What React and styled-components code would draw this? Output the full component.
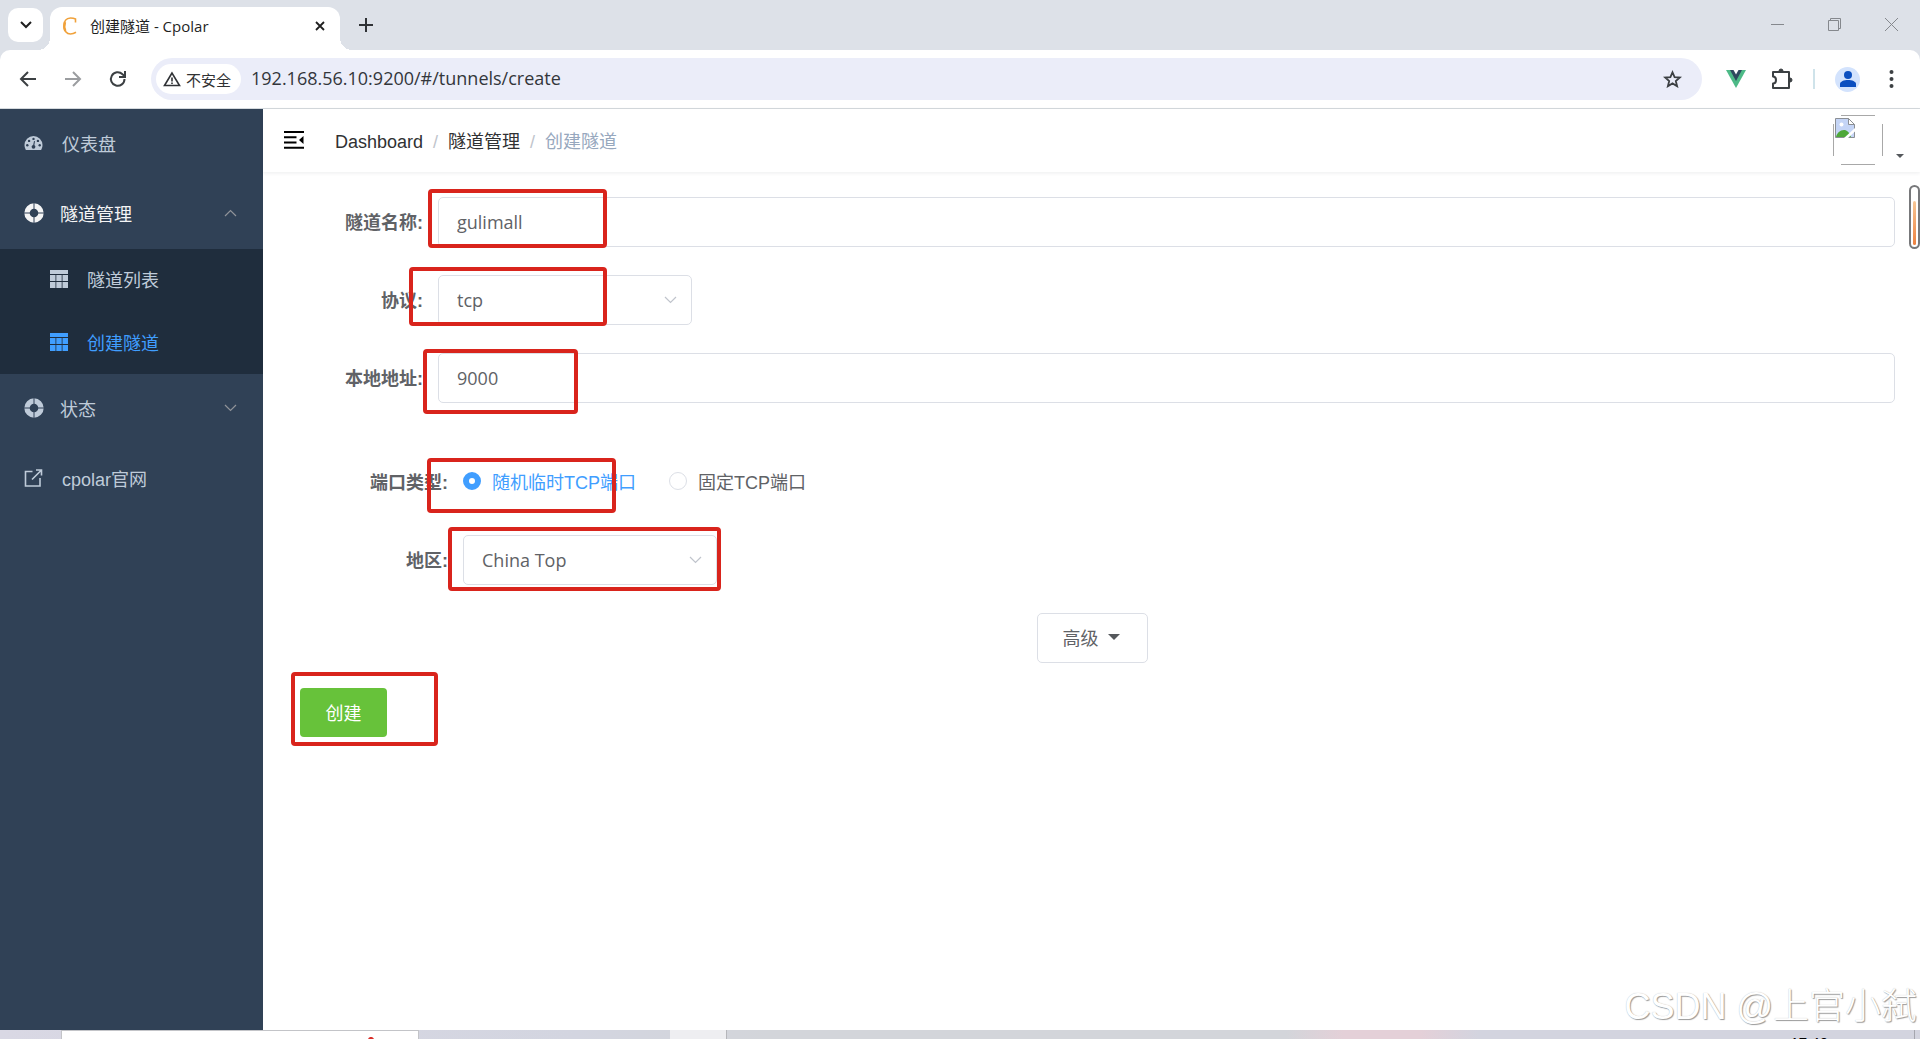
import React, { useState } from "react";
import styled, { createGlobalStyle, ThemeProvider } from "styled-components";

const theme = {
  Color: {
    blue: "#409eff",
    green: "#67c23a",
    red: "#d9241c",
    border: "#dcdfe6",
    text: "#606266",
    sidebar: "#304156",
    submenu: "#1f2d3d",
    menuText: "#bfcbd9",
  },
  Font: {
    page: `"Liberation Sans", "Noto Sans CJK SC", sans-serif`,
    ui: `"Open Sans", "Noto Sans CJK SC", sans-serif`,
  },
};

const GlobalStyle = createGlobalStyle`
  * {
    box-sizing: border-box;
  }
  body {
    margin: 0;
    overflow: hidden;
    font-family: ${theme.Font.page};
    font-size: 18px;
    color: #303133;
    background: #fff;
  }
  button, input, select {
    font: inherit;
    color: inherit;
  }
  button {
    padding: 0;
    border: 0;
    background: none;
    cursor: pointer;
  }
  a {
    color: inherit;
    text-decoration: none;
  }
  svg {
    display: block;
    flex-shrink: 0;
  }
`;

const Screen = styled.div`
  display: flex;
  flex-direction: column;
  height: 100vh;
`;

const TabStrip = styled.div`
  display: flex;
  align-items: flex-end;
  height: 50px;
  padding-left: 8px;
  background: #dde1e8;
  flex-shrink: 0;
`;

const TabSearch = styled.button`
  display: flex;
  align-items: center;
  justify-content: center;
  width: 35px;
  height: 34px;
  margin: 0 7px 8px 0;
  border-radius: 10px;
  background: #fff;
`;

const Tab = styled.div`
  position: relative;
  display: flex;
  align-items: center;
  width: 290px;
  height: 43px;
  padding: 0 13px 6px 12px;
  border-radius: 12px 12px 0 0;
  background: #fff;
  font-family: ${({ theme }) => theme.Font.ui};
  font-size: 15px;
  color: #1f1f1f;

  &::before,
  &::after {
    content: "";
    position: absolute;
    bottom: 0;
    width: 12px;
    height: 12px;
  }
  &::before {
    right: 100%;
    background: radial-gradient(circle at 0 0, transparent 12px, #fff 12px);
  }
  &::after {
    left: 100%;
    background: radial-gradient(circle at 100% 0, transparent 12px, #fff 12px);
  }
`;

const TabTitle = styled.span`
  flex: 1;
  margin-left: 13px;
`;

const NewTab = styled.button`
  display: flex;
  margin: 0 0 18px 19px;
`;

const WindowButtons = styled.div`
  display: flex;
  gap: 44px;
  margin: 0 22px 19px auto;
`;

const ToolbarRoot = styled.div`
  flex-shrink: 0;
  background: #dde1e8;
  .Toolbar-inner {
    display: flex;
    align-items: center;
    height: 59px;
    padding: 0 26px 0 18px;
    border-radius: 10px 10px 0 0;
    border-bottom: 1px solid #d5dade;
    background: #fff;
  }
  .Toolbar-nav {
    display: flex;
    align-items: center;
    gap: 25px;
    margin-right: 23px;
  }
  .Toolbar-nav button {
    display: flex;
  }
  .Toolbar-actions {
    display: flex;
    align-items: center;
    margin-left: 24px;
  }
`;

const AddressBar = styled.div`
  display: flex;
  align-items: center;
  flex: 1;
  height: 42px;
  padding: 0 20px 0 5px;
  border-radius: 21px;
  background: #ebedf9;
  font-family: ${({ theme }) => theme.Font.ui};
`;

const SafetyChip = styled.button`
  display: flex;
  align-items: center;
  gap: 5px;
  height: 30px;
  padding: 0 10px 0 7px;
  border-radius: 15px;
  background: #fff;
  font-size: 15px;
  white-space: nowrap;
`;

const Url = styled.input`
  flex: 1;
  min-width: 0;
  margin-left: 10px;
  padding: 0 0 2px;
  border: 0;
  outline: 0;
  background: none;
  color: #33363b;
`;

const ExtensionButtons = styled.div`
  display: flex;
  align-items: center;
  gap: 25px;
`;

const Divider = styled.span`
  width: 2px;
  height: 20px;
  margin: 0 20px;
  background: #cfe3ea;
`;

const Profile = styled.button`
  display: flex;
  align-items: center;
  justify-content: center;
  width: 25px;
  height: 25px;
  margin-right: 29px;
  border-radius: 50%;
  background: #d3e3fd;
`;

const Page = styled.div`
  display: flex;
  flex: 1;
  min-height: 0;
`;

const Sidebar = styled.nav`
  width: 263px;
  flex-shrink: 0;
  background: ${({ theme }) => theme.Color.sidebar};
`;

const MenuItem = styled.a`
  display: flex;
  align-items: center;
  height: ${({ $nested }) => ($nested ? 62 : 70)}px;
  padding: 0 26px 2px ${({ $nested }) => ($nested ? 50 : 24)}px;
  color: ${({ theme, $active, $open }) =>
    $active ? theme.Color.blue : $open ? "#f4f4f5" : theme.Color.menuText};

  .MenuItem-label {
    flex: 1;
    margin-left: ${({ $gap }) => $gap || 16}px;
  }
`;

const SubMenu = styled.div`
  display: flex;
  flex-direction: column;
  gap: 1px;
  background: ${({ theme }) => theme.Color.submenu};
`;

const Main = styled.main`
  position: relative;
  flex: 1;
  min-width: 0;
`;

const Navbar = styled.header`
  display: flex;
  align-items: center;
  height: 63px;
  padding: 0 16px 2px 21px;
  box-shadow: 0 1px 4px rgba(0, 21, 41, 0.08);
`;

const Breadcrumb = styled.div`
  display: flex;
  align-items: baseline;
  flex: 1;
  margin-left: 31px;
  .Separator {
    margin: 0 10px;
    color: #c0c4cc;
  }
  .Current {
    color: #97a8be;
  }
`;

const AvatarButton = styled.button`
  display: flex;
  align-items: flex-end;
  gap: 13px;
  .Caret {
    margin-bottom: 7px;
  }
`;

const Form = styled.form`
  padding: 25px 25px 0 26px;
`;

const Row = styled.div`
  position: relative;
  display: flex;
  align-items: center;
  height: 50px;
  margin-bottom: ${({ $last }) => ($last ? 54 : 28)}px;
`;

const Label = styled.label`
  width: ${({ $wide }) => ($wide ? 174 : 149)}px;
  padding: 0 15px 2px 0;
  flex-shrink: 0;
  text-align: right;
  font-weight: 700;
  white-space: nowrap;
  color: ${({ theme }) => theme.Color.text};
`;

const TextInput = styled.input`
  flex: 1;
  min-width: 0;
  height: 50px;
  padding: 0 18px;
  border: 1px solid ${({ theme }) => theme.Color.border};
  border-radius: 5px;
  outline: 0;
  background: #fff;
  font-family: ${({ theme }) => theme.Font.ui};
  color: ${({ theme }) => theme.Color.text};
`;

const SelectBox = styled.div`
  position: relative;
  width: 254px;
  select {
    width: 100%;
    height: 50px;
    padding: 0 40px 0 18px;
    border: 1px solid ${({ theme }) => theme.Color.border};
    border-radius: 5px;
    outline: 0;
    appearance: none;
    background: #fff;
    font-family: ${({ theme }) => theme.Font.ui};
    color: ${({ theme }) => theme.Color.text};
  }
  svg {
    position: absolute;
    top: 21px;
    right: 15px;
    pointer-events: none;
  }
`;

const RadioLabel = styled.label`
  display: flex;
  align-items: center;
  margin-right: 33px;
  padding-bottom: 2px;
  white-space: nowrap;
  color: ${({ theme, $checked }) =>
    $checked ? theme.Color.blue : theme.Color.text};
  input {
    width: 18px;
    height: 18px;
    margin: 0 11px 0 0;
    appearance: none;
    border: 1px solid ${({ theme }) => theme.Color.border};
    border-radius: 50%;
    background: #fff;
  }
  input:checked {
    border: 6px solid ${({ theme }) => theme.Color.blue};
  }
`;

// red marker drawn over a form row
const Marker = styled.span`
  position: absolute;
  top: ${({ $top }) => $top}px;
  left: ${({ $left }) => $left}px;
  width: ${({ $width }) => $width}px;
  height: ${({ $height }) => $height}px;
  border: 4px solid ${({ theme }) => theme.Color.red};
  border-radius: 4px;
  pointer-events: none;
`;

const AdvancedButton = styled.button`
  display: flex;
  align-items: center;
  gap: 9px;
  height: 50px;
  margin: 0 auto 25px;
  padding: 0 27px 2px 25px;
  border: 1px solid ${({ theme }) => theme.Color.border};
  border-radius: 5px;
  color: ${({ theme }) => theme.Color.text};
`;

const Submit = styled.div`
  position: relative;
  display: flex;
  padding-left: 11px;
  button {
    width: 87px;
    height: 49px;
    padding-bottom: 2px;
    border-radius: 4px;
    background: ${({ theme }) => theme.Color.green};
    color: #fff;
  }
`;

const Gauge = styled.div`
  position: absolute;
  top: 76px;
  right: 0;
  width: 11px;
  height: 64px;
  padding: 14px 2px 0;
  border: 2px solid #77787a;
  border-radius: 6px;
  background: #fff;
  &::after {
    content: "";
    display: block;
    height: 44px;
    border-radius: 3px;
    background: linear-gradient(#f7c796, #ee8240);
  }
`;

const Watermark = styled.div`
  position: absolute;
  right: 3px;
  bottom: 0;
  font-size: 36px;
  font-weight: 300;
  line-height: 46px;
  white-space: nowrap;
  color: #fff;
  text-shadow: 1px 1px 1px #999, 0 0 1px #bbb;
  pointer-events: none;
`;

const Taskbar = styled.footer`
  display: flex;
  height: 9px;
  overflow: hidden;
  flex-shrink: 0;
  padding: 0 5px 0 61px;
  background: linear-gradient(
    90deg,
    #d9d8e4,
    #d3d5e0 30%,
    #d3d5da 40%,
    #d3d5da 67%,
    #e4d0d8 70%,
    #e4d0d8 74%,
    #d3d4df 77%
  );
  .Taskbar-search {
    display: flex;
    justify-content: flex-end;
    width: 358px;
    padding: 6px 40px 0 0;
    border: 1px solid #c3c4c8;
    border-bottom: 0;
    background: #fff;
  }
  .Taskbar-app {
    width: 57px;
    margin-left: 251px;
    border-right: 1px solid #b5b6ba;
    background: #eeeef1;
  }
  .Taskbar-tray {
    display: flex;
    flex: 1;
    justify-content: flex-end;
    padding: 4px 86px 0 0;
    border-right: 1px solid #a5a6ae;
    font-size: 15px;
    line-height: 17px;
    color: #000;
  }
`;

const Chevron = ({ up, color = "#c0c4cc" }) => (
  <svg width="13" height="8" viewBox="0 0 13 8" fill="none" stroke={color}>
    <path d={up ? "M1 7l5.5-5.5L12 7" : "M1 1l5.5 5.5L12 1"} strokeWidth="1.2" />
  </svg>
);

const Caret = ({ width = 12, className }) => (
  <svg
    className={className}
    width={width}
    height={width / 2}
    viewBox="0 0 12 6"
    fill="#55585c"
  >
    <path d="M0 0h12L6 6z" />
  </svg>
);

const DashboardIcon = () => (
  <svg width="19" height="18" viewBox="0 0 18 18" fill="currentColor">
    <path d="M9 2a9 9 0 0 0-9 9c0 1.800.5 3.500 1.400 5h15.200c.9-1.500 1.400-3.200 1.400-5a9 9 0 0 0-9-9z" />
    <g fill="#304156">
      <circle cx="2.800" cy="11.300" r="1.200" />
      <circle cx="4.600" cy="6.900" r="1.200" />
      <circle cx="9" cy="4.900" r="1.200" />
      <circle cx="13.400" cy="6.900" r="1.200" />
      <circle cx="15.200" cy="11.300" r="1.200" />
      <circle cx="9" cy="12.800" r="1.900" />
      <path d="M8.500 12l1-5 1 .2-.8 5z" />
    </g>
  </svg>
);

const RingIcon = () => (
  <svg width="20" height="20" viewBox="0 0 20 20" fill="none">
    <circle cx="10" cy="10" r="7" stroke="currentColor" strokeWidth="5.400" />
    <path
      d="M10 0v6M10 14v6M0 10h6M14 10h6"
      stroke="#304156"
      strokeWidth="1"
    />
  </svg>
);

const TableIcon = () => (
  <svg width="18" height="18" viewBox="0 0 18 18" fill="currentColor">
    <path d="M0 0h18v4H0zM0 5h5.500v6H0zM6.300 5h5.400v6H6.300zM12.500 5H18v6h-5.500zM0 12h5.500v6H0zM6.300 12h5.400v6H6.300zM12.500 12H18v6h-5.500z" />
  </svg>
);

const LinkIcon = () => (
  <svg
    width="19"
    height="18"
    viewBox="0 0 18 18"
    fill="none"
    stroke="currentColor"
    strokeWidth="1.600"
  >
    <path d="M8 2.500H1v14.500h14.500V9M7.500 10.500L16.500 1.500M11.500 1H17v5.500" />
  </svg>
);

const FoldIcon = () => (
  <svg width="20" height="18" viewBox="0 0 20 18" fill="#000">
    <path d="M0 0h20v2H0zM0 5.300h12.500v2H0zM0 10.500h12.500v2H0zM0 15.800h20v2H0zM19.500 5v8L15 9z" />
  </svg>
);

const BrokenAvatar = () => (
  <svg width="50" height="50" viewBox="0 0 50 50" fill="none">
    <path d="M8 .5h34M8 49.500h34M.5 9v32M49.500 9v32" stroke="#a8a8a8" />
    <g transform="translate(2 3)">
      <path d="M.5.500h13l6 6v13H.5z" fill="#c5d5f6" stroke="#8b8f94" />
      <path d="M13.500.500v6h6z" fill="#fff" stroke="#8b8f94" />
      <circle cx="6.500" cy="6.500" r="2" fill="#fff" />
      <path d="M1 19c1-4 4-7 8-7 3 0 5 2 7 7z" fill="#4fa83a" />
      <path d="M9 20L20 10v3.500L13 20z" fill="#fff" />
    </g>
  </svg>
);

export default function App() {
  const [name, setName] = useState("gulimall");
  const [address, setAddress] = useState("9000");
  const [portType, setPortType] = useState("random");

  return (
    <ThemeProvider theme={theme}>
      <GlobalStyle />
      <Screen>
        <TabStrip>
          <TabSearch aria-label="搜索标签页">
            <svg width="12" height="8" viewBox="0 0 12 8" fill="none" stroke="#1f1f1f" strokeWidth="2">
              <path d="M1 1l5 5 5-5" />
            </svg>
          </TabSearch>
          <Tab>
            <svg width="15" height="18" viewBox="0 0 15 18" fill="none" stroke="#f0a13a">
              <path
                d="M13.500 5.500V2C11.500 1 10 1 8.500 1 4 1 2 4.500 2 9s2.500 8 6.500 8c2 0 3.500-.5 5.500-1.700"
                strokeWidth="1.600"
              />
              <path d="M3 5c-1 3-1 6 .3 9" strokeWidth="2.400" />
            </svg>
            <TabTitle>创建隧道 - Cpolar</TabTitle>
            <button aria-label="关闭标签页">
              <svg width="14" height="12" viewBox="0 0 14 12" stroke="#1f1f1f" strokeWidth="1.800">
                <path d="M3 2l8 8M11 2l-8 8" />
              </svg>
            </button>
          </Tab>
          <NewTab aria-label="新标签页">
            <svg width="14" height="14" viewBox="0 0 14 14" stroke="#303236" strokeWidth="2">
              <path d="M7 0v14M0 7h14" />
            </svg>
          </NewTab>
          <WindowButtons>
            <button aria-label="最小化">
              <svg width="13" height="13" viewBox="0 0 13 13" stroke="#85888d">
                <path d="M0 6.500h13" />
              </svg>
            </button>
            <button aria-label="还原">
              <svg width="13" height="13" viewBox="0 0 13 13" fill="none" stroke="#85888d">
                <path d="M.5 2.500h10v10H.5zM2.500 2.500v-2h10v10h-2" />
              </svg>
            </button>
            <button aria-label="关闭">
              <svg width="13" height="13" viewBox="0 0 13 13" stroke="#85888d">
                <path d="M0 0l13 13M13 0L0 13" />
              </svg>
            </button>
          </WindowButtons>
        </TabStrip>

        <ToolbarRoot>
          <div className="Toolbar-inner">
            <div className="Toolbar-nav">
              <button aria-label="后退">
                <svg width="20" height="16" viewBox="0 0 20 16" fill="none" stroke="#3c4043" strokeWidth="2">
                  <path d="M18 8H3M10 1L3 8l7 7" />
                </svg>
              </button>
              <button aria-label="前进">
                <svg width="20" height="16" viewBox="0 0 20 16" fill="none" stroke="#9b9da0" strokeWidth="2">
                  <path d="M2 8h15M10 1l7 7-7 7" />
                </svg>
              </button>
              <button aria-label="重新加载">
                <svg width="20" height="18" viewBox="0 0 20 18" fill="none" stroke="#3c4043" strokeWidth="2">
                  <path d="M16.500 9a6.800 6.800 0 1 1-2-4.800L16.500 6M17 1v6h-6" />
                </svg>
              </button>
            </div>
            <AddressBar>
              <SafetyChip>
                <svg width="18" height="16" viewBox="0 0 18 16" fill="none" stroke="#303236" strokeWidth="1.600">
                  <path d="M9 2L1.500 14.500h15zM9 6.500v4M9 11.500v1.500" />
                </svg>
                不安全
              </SafetyChip>
              <Url aria-label="地址" defaultValue="192.168.56.10:9200/#/tunnels/create" />
              <button aria-label="收藏">
                <svg width="19" height="18" viewBox="0 0 19 18" fill="none" stroke="#3c4043" strokeWidth="1.800">
                  <path d="M9.500 2.300l2.100 4.800 5.200.4-4 3.500 1.300 5.200-4.600-2.800-4.600 2.800L6.200 11l-4-3.500 5.200-.4z" />
                </svg>
              </button>
            </AddressBar>
            <div className="Toolbar-actions">
              <ExtensionButtons>
                <button aria-label="Vue.js devtools">
                  <svg width="20" height="18" viewBox="0 0 20 18">
                    <path d="M0 0h20L10 18z" fill="#4dba87" />
                    <path d="M4 0h12l-6 11z" fill="#2f495e" />
                    <path d="M7.500 0h5L10 4.500z" fill="#fff" />
                  </svg>
                </button>
                <button aria-label="扩展程序">
                  <svg width="22" height="22" viewBox="0 0 22 22" fill="none" stroke="#3c4043" strokeWidth="2">
                    <path d="M2 4h16v16H2v-4.500c4 0 4-7 0-7z" strokeLinejoin="round" />
                    <path d="M8 3a2 2 0 0 1 4 0zM19 10a2 2 0 0 1 0 4z" fill="#3c4043" strokeWidth="1" />
                  </svg>
                </button>
              </ExtensionButtons>
              <Divider />
              <Profile aria-label="个人资料">
                <svg width="16" height="16" viewBox="0 0 16 16" fill="#0b4fc0">
                  <circle cx="8" cy="4" r="4" />
                  <path d="M0 16v-3c0-2.500 4-4 8-4s8 1.500 8 4v3z" />
                </svg>
              </Profile>
              <button aria-label="菜单">
                <svg width="5" height="18" viewBox="0 0 5 18" fill="#3c4043">
                  <circle cx="2.500" cy="2" r="2" />
                  <circle cx="2.500" cy="9" r="2" />
                  <circle cx="2.500" cy="16" r="2" />
                </svg>
              </button>
            </div>
          </div>
        </ToolbarRoot>

        <Page>
          <Sidebar>
            <MenuItem href="#/dashboard" $gap={19}>
              <DashboardIcon />
              <span className="MenuItem-label">仪表盘</span>
            </MenuItem>
            <MenuItem href="#/tunnels" $open>
              <RingIcon />
              <span className="MenuItem-label">隧道管理</span>
              <Chevron up color="#909399" />
            </MenuItem>
            <SubMenu>
              <MenuItem href="#/tunnels/list" $nested $gap={19}>
                <TableIcon />
                <span className="MenuItem-label">隧道列表</span>
              </MenuItem>
              <MenuItem href="#/tunnels/create" $nested $active $gap={19}>
                <TableIcon />
                <span className="MenuItem-label">创建隧道</span>
              </MenuItem>
            </SubMenu>
            <MenuItem href="#/status">
              <RingIcon />
              <span className="MenuItem-label">状态</span>
              <Chevron color="#909399" />
            </MenuItem>
            <MenuItem href="#/site" $gap={19}>
              <LinkIcon />
              <span className="MenuItem-label">cpolar官网</span>
            </MenuItem>
          </Sidebar>

          <Main>
            <Navbar>
              <button aria-label="折叠菜单">
                <FoldIcon />
              </button>
              <Breadcrumb>
                <a href="#/dashboard">Dashboard</a>
                <span className="Separator">/</span>
                <a href="#/tunnels">隧道管理</a>
                <span className="Separator">/</span>
                <span className="Current">创建隧道</span>
              </Breadcrumb>
              <AvatarButton aria-label="用户菜单">
                <BrokenAvatar />
                <Caret className="Caret" width={8} />
              </AvatarButton>
            </Navbar>

            <Form onSubmit={(e) => e.preventDefault()}>
              <Row>
                <Label htmlFor="name">隧道名称:</Label>
                <TextInput
                  id="name"
                  value={name}
                  onChange={(e) => setName(e.target.value)}
                />
                <Marker $top={-8} $left={139} $width={179} $height={59} />
              </Row>
              <Row>
                <Label htmlFor="protocol">协议:</Label>
                <SelectBox>
                  <select id="protocol" defaultValue="tcp">
                    <option>tcp</option>
                  </select>
                  <Chevron />
                </SelectBox>
                <Marker $top={-8} $left={120} $width={198} $height={59} />
              </Row>
              <Row $last>
                <Label htmlFor="address">本地地址:</Label>
                <TextInput
                  id="address"
                  value={address}
                  onChange={(e) => setAddress(e.target.value)}
                />
                <Marker $top={-4} $left={134} $width={155} $height={65} />
              </Row>

              <Row role="radiogroup" aria-labelledby="port-type">
                <Label as="span" id="port-type" $wide>
                  端口类型:
                </Label>
                <RadioLabel $checked={portType === "random"}>
                  <input
                    type="radio"
                    name="port"
                    checked={portType === "random"}
                    onChange={() => setPortType("random")}
                  />
                  随机临时TCP端口
                </RadioLabel>
                <RadioLabel $checked={portType === "fixed"}>
                  <input
                    type="radio"
                    name="port"
                    checked={portType === "fixed"}
                    onChange={() => setPortType("fixed")}
                  />
                  固定TCP端口
                </RadioLabel>
                <Marker $top={1} $left={138} $width={189} $height={55} />
              </Row>
              <Row>
                <Label htmlFor="region" $wide>
                  地区:
                </Label>
                <SelectBox>
                  <select id="region" defaultValue="China Top">
                    <option>China Top</option>
                  </select>
                  <Chevron />
                </SelectBox>
                <Marker $top={-8} $left={159} $width={273} $height={64} />
              </Row>

              <AdvancedButton type="button">
                高级 <Caret />
              </AdvancedButton>
              <Submit>
                <button type="submit">创建</button>
                <Marker $top={-16} $left={2} $width={147} $height={74} />
              </Submit>
            </Form>

            <Gauge />
            <Watermark>CSDN @上官小弑</Watermark>
          </Main>
        </Page>

        <Taskbar>
          <div className="Taskbar-search">
            <svg width="14" height="3" viewBox="0 0 14 3" fill="#d9302a">
              <path d="M4 3c0-4 6-4 6 0zM0 2h2v1H0zM12 2h2v1h-2z" />
            </svg>
          </div>
          <div className="Taskbar-app" />
          <div className="Taskbar-tray">17:40</div>
        </Taskbar>
      </Screen>
    </ThemeProvider>
  );
}
